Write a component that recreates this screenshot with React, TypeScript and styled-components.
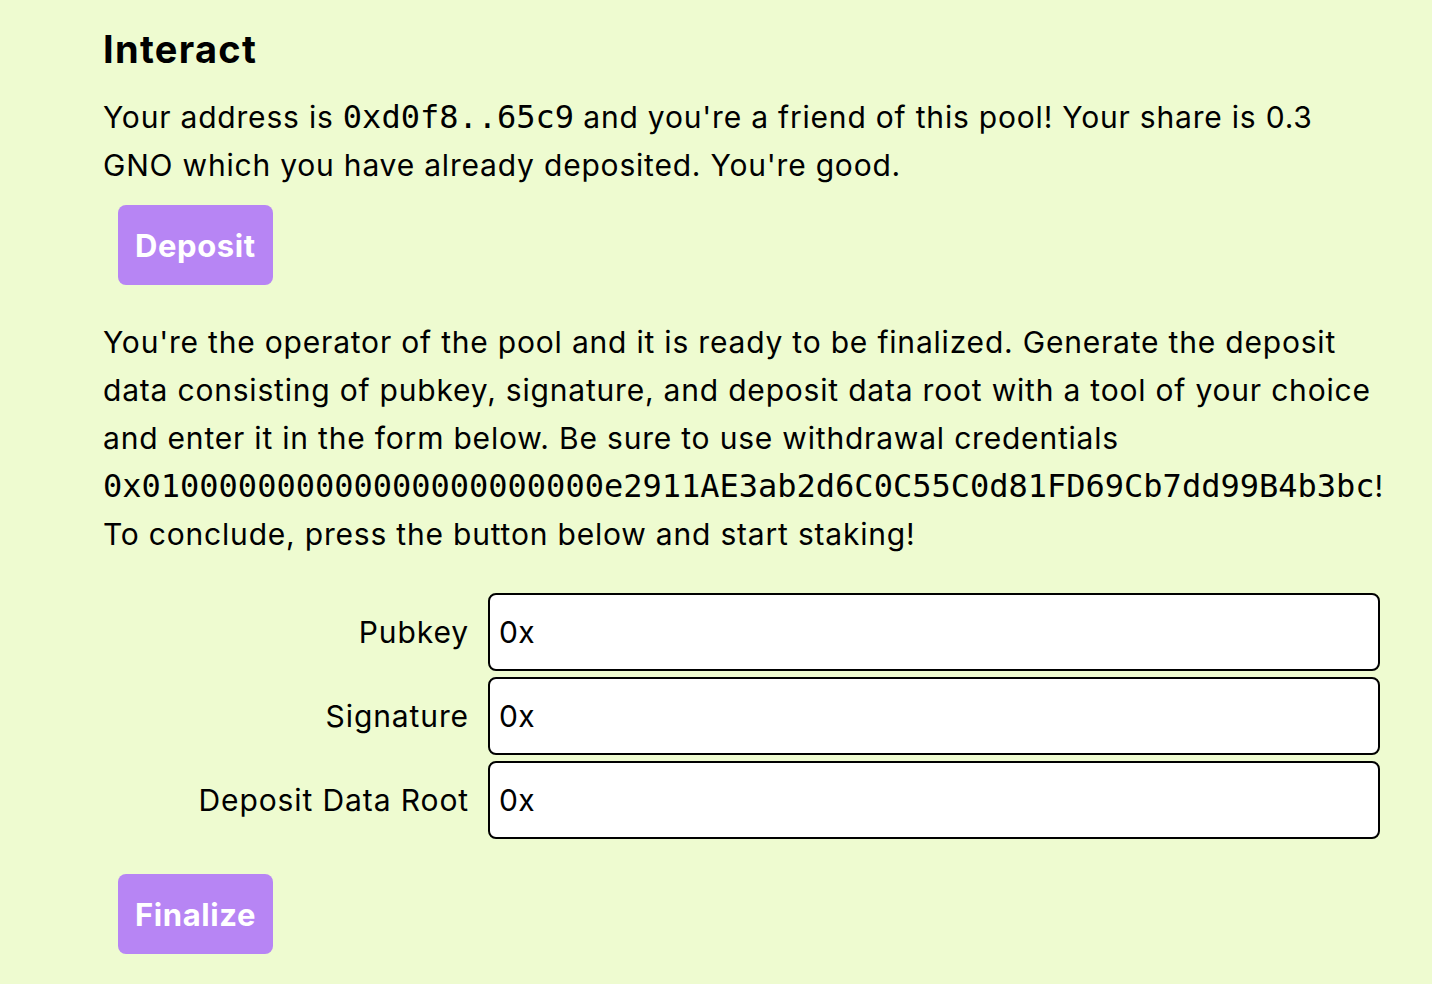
import React from "react";
import styled, { createGlobalStyle } from "styled-components";

const GlobalStyle = createGlobalStyle`
  html, body {
    margin: 0;
    padding: 0;
    background: #eefbd0;
  }
  body {
    font-family: Inter, "Noto Sans", "Liberation Sans", sans-serif;
    color: #000;
  }
`;

const Page = styled.main`
  min-height: 984px;
  background: #eefbd0;
  padding: 27px 0 0 103px;
  box-sizing: border-box;
`;

const Section = styled.section`
  width: 1280px;
`;

const Title = styled.h2`
  margin: 0 0 22px;
  font-size: 38px;
  line-height: 44px;
  font-weight: 700;
  letter-spacing: 1.3px;
`;

const Text = styled.p`
  margin: 0;
  font-size: 30px;
  line-height: 48px;
  letter-spacing: 0.8px;
`;

const Code = styled.code`
  font-family: "DejaVu Sans Mono", "Liberation Mono", monospace;
  font-size: 32px;
  letter-spacing: 0;
`;

const Button = styled.button<{ $top: number; $bottom: number }>`
  display: block;
  margin: ${(p) => p.$top}px 0 ${(p) => p.$bottom}px 15px;
  padding: 0 17px;
  height: 80px;
  border: none;
  border-radius: 8px;
  background: #b785f4;
  color: #fff;
  font-family: Inter, "Noto Sans", sans-serif;
  font-weight: 700;
  font-size: 31px;
  letter-spacing: 0.6px;
  cursor: pointer;
`;

const Form = styled.div`
  display: grid;
  grid-template-columns: 366px 1fr;
  column-gap: 19px;
  row-gap: 6px;
  margin-top: 35px;
  width: 1277px;
`;

const Label = styled.label`
  text-align: right;
  align-self: center;
  font-size: 30px;
  line-height: 48px;
  letter-spacing: 0.9px;
`;

const Input = styled.input`
  box-sizing: border-box;
  width: 100%;
  height: 78px;
  border: 2px solid #000;
  border-radius: 8px;
  background: #fff;
  padding: 0 9px;
  font-family: Inter, "Noto Sans", sans-serif;
  font-size: 30px;
  letter-spacing: 0.4px;
  color: #000;
  outline: none;
`;

const fields = ["Pubkey", "Signature", "Deposit Data Root"];
const credentials = "0x01" + "0".repeat(22) + "e2911AE3ab2d6C0C55C0d81FD69Cb7dd99B4b3bc";

export default function App() {
  return (
    <>
      <GlobalStyle />
      <Page>
        <Section>
          <Title>Interact</Title>
          <Text>
            Your address is <Code>0xd0f8..65c9</Code> and you're a friend of this pool! Your share is 0.3 GNO which you
            have already deposited. You're good.
          </Text>
          <Button $top={16} $bottom={33}>Deposit</Button>
          <Text>
            You're the operator of the pool and it is ready to be finalized. Generate the deposit data consisting of
            pubkey, signature, and deposit data root with a tool of your choice and enter it in the form below. Be sure
            to use withdrawal credentials <Code>{credentials}</Code>! To conclude, press the button below and start
            staking!
          </Text>
          <Form>
            {fields.map((f) => (
              <React.Fragment key={f}>
                <Label>{f}</Label>
                <Input defaultValue="0x" />
              </React.Fragment>
            ))}
          </Form>
          <Button $top={35} $bottom={0}>Finalize</Button>
        </Section>
      </Page>
    </>
  );
}
